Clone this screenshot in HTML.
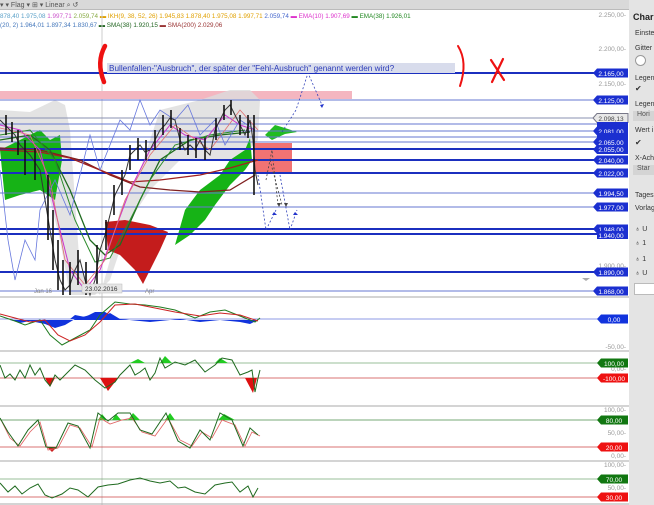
<!DOCTYPE html>
<html><head><meta charset="utf-8"><style>
html,body{margin:0;padding:0;background:#fff;overflow:hidden}
body{width:654px;height:505px;position:relative;font-family:"Liberation Sans",sans-serif}
svg{position:absolute;left:0;top:0}
.rp{position:absolute;left:629px;top:0;width:25px;height:505px;background:#e4e4e4}
.rp div{position:absolute;left:6px;font-size:7px;color:#333;white-space:nowrap}
</style></head><body>
<svg width="654" height="505" viewBox="0 0 654 505" font-family="Liberation Sans, sans-serif">
<rect x="0" y="0" width="654" height="10" fill="#d9d9d9"/>
<rect x="0" y="9" width="654" height="1" fill="#bbb"/>
<text x="0" y="7" font-size="7" fill="#555">▾ ▾ Flag  ▾  ⊞   ▾ Linear   ⌕  ↺</text>
<text font-size="6.3" y="18"><tspan fill="#5aa0c8">878,40 1.975,08 </tspan><tspan fill="#cc55cc">1.997,71 </tspan><tspan fill="#88aa44">2.059,74 </tspan><tspan fill="#e0a000">▬ IKH(9, 38, 52, 26) 1.945,83 1.878,40 1.975,08 1.997,71 </tspan><tspan fill="#4466cc">2.059,74 </tspan><tspan fill="#dd33cc">▬ EMA(10) 1.907,69 </tspan><tspan fill="#228822">▬ EMA(38) 1.926,01</tspan></text>
<text font-size="6.3" y="27"><tspan fill="#4477bb">(20, 2) 1.964,01 1.897,34 1.830,67 </tspan><tspan fill="#226622">▬ SMA(38) 1.920,15 </tspan><tspan fill="#993333">▬ SMA(200) 2.029,06</tspan></text>
<line x1="102" y1="10" x2="102" y2="505" stroke="#ccc" stroke-width="1"/>
<rect x="0" y="91" width="352" height="8" fill="#f4b6c0"/>
<path d="M0,110 L30,112 L55,100 L65,105 L70,130 L75,200 L80,270 L100,295 L110,260 L120,210 L140,170 L160,110 L200,100 L230,90 L250,90 L260,100 L258,140 L240,160 L220,160 L180,160 L150,190 L130,220 L110,280 L95,295 L70,295 L60,240 L45,180 L30,160 L0,150 Z" fill="#dcdcdc" opacity="0.8"/>
<path d="M0,150 L20,140 L40,130 L50,140 L60,135 L62,160 L55,200 L40,190 L20,195 L5,200 Z" fill="#16b316"/>
<path d="M250,138 L245,150 L230,160 L220,175 L200,190 L185,210 L175,245 L190,235 L205,220 L215,205 L230,185 L245,170 L252,160 Z" fill="#16b316"/>
<path d="M265,135 L275,125 L285,128 L297,132 L285,134 L272,140 Z" fill="#22bb22"/>
<path d="M105,222 L125,220 L150,225 L168,232 L160,250 L150,270 L143,284 L135,270 L120,255 L108,250 Z" fill="#c41c1c"/>
<rect x="255" y="143" width="37" height="30" fill="#f05a5a" opacity="0.85"/>
<g stroke="#1b2fbf">
<line x1="0" y1="73" x2="600" y2="73" stroke-width="2"/>
<line x1="0" y1="100" x2="600" y2="100" stroke-width="1" stroke="#6677d0"/>
<line x1="0" y1="118" x2="600" y2="118" stroke-width="1" stroke="#8890b0"/>
<line x1="0" y1="124" x2="600" y2="124" stroke-width="1" stroke="#6677d0"/>
<line x1="0" y1="131" x2="600" y2="131" stroke-width="1" stroke="#6677d0"/>
<line x1="0" y1="137" x2="600" y2="137" stroke-width="1" stroke="#6677d0"/>
<line x1="0" y1="142" x2="600" y2="142" stroke-width="1" stroke="#6677d0"/>
<line x1="0" y1="149" x2="600" y2="149" stroke-width="2"/>
<line x1="0" y1="160" x2="600" y2="160" stroke-width="2"/>
<line x1="0" y1="173" x2="600" y2="173" stroke-width="2"/>
<line x1="0" y1="193" x2="600" y2="193" stroke-width="1" stroke="#6677d0"/>
<line x1="0" y1="207" x2="600" y2="207" stroke-width="1" stroke="#6677d0"/>
<line x1="0" y1="229" x2="600" y2="229" stroke-width="2"/>
<line x1="0" y1="234" x2="600" y2="234" stroke-width="2"/>
<line x1="0" y1="272" x2="600" y2="272" stroke-width="2"/>
<line x1="0" y1="291" x2="600" y2="291" stroke-width="1" stroke="#6677d0"/>
</g>
<polyline fill="none" stroke="#7f1f1f" stroke-width="1.3" points="0,148 40,150 80,160 110,175 140,187 170,190 200,192 230,190 255,175"/>
<polyline fill="none" stroke="#a02020" stroke-width="1.3" points="0,150 40,152 70,158 100,170 130,182 160,180 200,175 230,168 258,160"/>
<polyline fill="none" stroke="#1f6a1f" stroke-width="1.3" points="0,140 30,135 50,150 70,190 90,240 105,255 120,245 140,200 160,160 190,140 220,135 250,132"/>
<polyline fill="none" stroke="#2a8a2a" stroke-width="1" points="0,135 30,130 55,160 75,220 95,262 110,258 130,220 150,180 175,145 210,135 245,130"/>
<polyline fill="none" stroke="#cc33cc" stroke-width="1" points="0,125 20,130 40,150 55,210 70,270 85,290 100,270 115,230 130,190 150,150 170,125 185,135 205,140 225,115 240,125 255,130"/>
<polyline fill="none" stroke="#e07070" stroke-width="0.8" points="0,128 30,135 50,180 65,260 85,285 105,260 125,200 150,155 175,125 210,150 240,110 258,130"/>
<polyline fill="none" stroke="#6677dd" stroke-width="0.8" points="0,170 8,240 15,280 25,240 35,260 40,210 55,180 70,215 90,135 100,170 110,145 120,120 130,130 140,100 150,125 160,110 175,120 188,105 200,135 215,120 225,145 240,120 255,130"/>
<!-- price candles -->
<polyline fill="none" stroke="#333" stroke-width="1" points="0,120 5,125 10,130 15,135 20,145 25,150 30,155 40,170 45,200 50,230 55,260 60,280 65,290 70,285 75,270 80,260 85,280 90,295 95,280 100,250 105,235 110,215 115,195 120,185 125,175 130,155 135,150 140,145 145,152 150,150 155,140 160,130 165,125 170,118 175,120 180,140 185,150 190,145 195,150 200,140 205,150 210,155 215,130 220,120 225,110 230,105 235,115 240,125 245,135 250,120 253,140 255,170 258,185"/>
<g stroke="#111" stroke-width="1.6">
<line x1="6" y1="115" x2="6" y2="135"/><line x1="12" y1="122" x2="12" y2="142"/><line x1="18" y1="130" x2="18" y2="155"/><line x1="25" y1="140" x2="25" y2="175"/><line x1="35" y1="148" x2="35" y2="180"/>
<line x1="48" y1="175" x2="48" y2="240"/><line x1="53" y1="210" x2="53" y2="270"/><line x1="58" y1="240" x2="58" y2="290"/><line x1="63" y1="260" x2="63" y2="295"/><line x1="70" y1="262" x2="70" y2="295"/><line x1="78" y1="250" x2="78" y2="285"/><line x1="86" y1="262" x2="86" y2="295"/>
<line x1="97" y1="245" x2="97" y2="285"/><line x1="106" y1="220" x2="106" y2="250"/><line x1="114" y1="185" x2="114" y2="215"/><line x1="122" y1="170" x2="122" y2="195"/><line x1="130" y1="145" x2="130" y2="170"/><line x1="138" y1="138" x2="138" y2="160"/><line x1="146" y1="140" x2="146" y2="160"/><line x1="155" y1="130" x2="155" y2="150"/>
<line x1="163" y1="115" x2="163" y2="135"/><line x1="171" y1="110" x2="171" y2="128"/><line x1="180" y1="128" x2="180" y2="150"/><line x1="188" y1="135" x2="188" y2="155"/><line x1="196" y1="138" x2="196" y2="158"/><line x1="205" y1="138" x2="205" y2="160"/>
<line x1="216" y1="118" x2="216" y2="140"/><line x1="224" y1="105" x2="224" y2="120"/><line x1="231" y1="100" x2="231" y2="115"/><line x1="240" y1="115" x2="240" y2="135"/><line x1="248" y1="115" x2="248" y2="138"/><line x1="254" y1="115" x2="254" y2="195"/>
</g>
<g stroke="#3344bb" stroke-width="0.8" stroke-dasharray="2,2" fill="none">
<polyline points="282,132 296,110 308,73 322,105"/>
<polyline points="258,175 266,230 276,210"/>
<polyline points="280,175 290,230 297,210"/>
</g>
<g stroke="#444" stroke-width="0.8" stroke-dasharray="2,2" fill="none">
<polyline points="266,180 272,150 278,205"/>
<polyline points="270,160 282,205"/>
</g>
<g fill="#2233cc"><path d="M320,105 l4,-1 -2,4z"/><path d="M274,212 l3,3 -5,0z"/><path d="M295,212 l3,3 -5,0z"/></g>
<g fill="#444"><path d="M277,203 l4,0 -2,4z"/><path d="M284,203 l4,0 -2,4z"/></g>
<rect x="107" y="63" width="348" height="10" fill="#d8dcec"/>
<text x="109" y="71" font-size="8.2" fill="#2a3ab8">Bullenfallen-"Ausbruch", der später der "Fehl-Ausbruch" genannt werden wird?</text>
<path d="M105,46 Q96,62 104,82" stroke="#ee1111" stroke-width="4.5" fill="none" stroke-linecap="round"/>
<path d="M458,46 Q468,62 460,86" stroke="#ee1111" stroke-width="2" fill="none" stroke-linecap="round"/>
<path d="M491,60 L504,80 M503,59 L492,82" stroke="#ee1111" stroke-width="2.2" fill="none" stroke-linecap="round"/>
<line x1="0" y1="297" x2="629" y2="297" stroke="#aaa"/>
<text x="34" y="293" font-size="6" fill="#888">Jan 16</text>
<rect x="82" y="284" width="40" height="9" fill="#e6e6e6" stroke="#bbb" stroke-width="0.5"/>
<text x="85" y="291" font-size="6.5" fill="#333">23.02.2016</text>
<text x="145" y="293" font-size="6" fill="#888">Apr</text>
<path d="M582,278 l8,0 -4,3z" fill="#aaa"/>
<g font-size="6.5" fill="#999" text-anchor="end">
<text x="626" y="17">2.250,00-</text>
<text x="626" y="51">2.200,00-</text>
<text x="626" y="86">2.150,00-</text>
<text x="626" y="268">1.900,00-</text>
<text x="626" y="349">-50,00-</text>
<text x="626" y="371">0,00-</text>
<text x="626" y="412">100,00-</text>
<text x="626" y="435">50,00-</text>
<text x="626" y="458">0,00-</text>
<text x="626" y="467">100,00-</text>
<text x="626" y="490">50,00-</text>
</g>
<g font-size="6.5" fill="#fff" text-anchor="middle">
<path d="M597,68.5 h31 v9 h-31 l-4,-4.5z" fill="#1b2fd0"/><text x="611" y="76">2.165,00</text>
<path d="M597,95.5 h31 v9 h-31 l-4,-4.5z" fill="#1b2fd0"/><text x="611" y="103">2.125,00</text>
<path d="M597,113.5 h31 v9 h-31 l-4,-4.5z" fill="#e8e8e8" stroke="#778"/><text x="611" y="121" fill="#444">2.098,13</text>
<path d="M597,122 h31 v6 h-31z" fill="#1b2fd0"/>
<path d="M597,126.5 h31 v9 h-31 l-4,-4.5z" fill="#1b2fd0"/><text x="611" y="134">2.081,00</text>
<path d="M597,133 h31 v6 h-31z" fill="#1b2fd0"/>
<path d="M597,137.5 h31 v9 h-31 l-4,-4.5z" fill="#1b2fd0"/><text x="611" y="145">2.065,00</text>
<path d="M597,145 h31 v9 h-31 l-4,-4.5z" fill="#1b2fd0"/><text x="611" y="152">2.055,00</text>
<path d="M597,155.5 h31 v9 h-31 l-4,-4.5z" fill="#1b2fd0"/><text x="611" y="163">2.040,00</text>
<path d="M597,168.5 h31 v9 h-31 l-4,-4.5z" fill="#1b2fd0"/><text x="611" y="176">2.022,00</text>
<path d="M597,188.5 h31 v9 h-31 l-4,-4.5z" fill="#1b2fd0"/><text x="611" y="196">1.994,50</text>
<path d="M597,202.5 h31 v9 h-31 l-4,-4.5z" fill="#1b2fd0"/><text x="611" y="210">1.977,00</text>
<path d="M597,224.5 h31 v9 h-31 l-4,-4.5z" fill="#1b2fd0"/><text x="611" y="232">1.948,00</text>
<path d="M597,231 h31 v8 h-31z" fill="#1b2fd0"/><text x="611" y="238">1.940,00</text>
<path d="M597,267.5 h31 v9 h-31 l-4,-4.5z" fill="#1b2fd0"/><text x="611" y="275">1.890,00</text>
<path d="M597,286.5 h31 v9 h-31 l-4,-4.5z" fill="#1b2fd0"/><text x="611" y="294">1.868,00</text>
</g>
<line x1="0" y1="319" x2="600" y2="319" stroke="#6677dd" stroke-width="0.8"/>
<path d="M10,320 L20,323 L30,321 L45,324 L55,328 L65,325 L75,319 L90,315 L100,318 L110,313 L120,319 L150,322 L160,321 L180,319 L200,322 L220,320 L240,322 L250,324 L258,320 Z" fill="#1133dd"/>
<path d="M70,319 L75,315 L85,317 L95,312 L105,312 L115,318 Z" fill="#1133dd"/>
<polyline fill="none" stroke="#1f7a1f" stroke-width="1" points="0,316 15,321 25,325 40,320 50,335 62,345 75,338 90,330 100,315 115,302 130,304 145,305 160,307 175,310 195,318 210,312 225,310 240,316 255,322 260,318"/>
<polyline fill="none" stroke="#cc2222" stroke-width="1" points="0,314 15,318 30,322 45,320 58,335 70,341 85,335 100,322 115,305 135,304 155,308 175,312 200,316 220,313 240,315 258,321"/>
<path d="M601,314.5 h27 v9 h-27 l-4,-4.5z" fill="#1133dd"/><text x="614" y="322" font-size="6.5" fill="#fff" text-anchor="middle">0,00</text>
<line x1="0" y1="351" x2="629" y2="351" stroke="#aaa"/>
<line x1="0" y1="363" x2="600" y2="363" stroke="#77aa77" stroke-width="0.8"/>
<line x1="0" y1="378" x2="600" y2="378" stroke="#cc4444" stroke-width="0.8"/>
<path d="M45,378 L50,387 L55,378 Z M100,378 L108,391 L118,378 Z M245,378 L253,393 L257,378 Z" fill="#dd1111"/>
<path d="M160,363 L165,356 L172,363 Z M215,363 L220,358 L228,363 Z M130,363 L138,359 L145,363 Z" fill="#22cc22"/>
<polyline fill="none" stroke="#1f6a1f" stroke-width="1" points="0,365 5,378 10,374 15,380 20,370 25,378 30,365 35,375 40,368 45,380 50,386 55,375 60,380 68,372 75,365 85,370 95,380 105,388 115,382 120,375 130,365 135,375 140,372 145,368 150,380 155,373 160,358 165,368 175,362 185,365 195,360 205,372 215,365 222,358 232,360 240,375 248,372 252,370 255,392 258,378 260,370"/>
<path d="M601,358.5 h27 v9 h-27 l-4,-4.5z" fill="#117711"/><text x="614" y="366" font-size="6.5" fill="#fff" text-anchor="middle">100,00</text>
<path d="M601,373.5 h27 v9 h-27 l-4,-4.5z" fill="#ee1111"/><text x="614" y="381" font-size="6.5" fill="#fff" text-anchor="middle">-100,00</text>
<line x1="0" y1="406" x2="629" y2="406" stroke="#aaa"/>
<line x1="0" y1="420" x2="600" y2="420" stroke="#77aa77" stroke-width="1"/>
<line x1="0" y1="447" x2="600" y2="447" stroke="#cc4444" stroke-width="0.8"/>
<path d="M98,420 L102,414 L107,420 Z M112,420 L116,414 L121,420 Z M128,420 L133,413 L140,420 Z M165,420 L170,413 L175,420 Z M218,420 L224,414 L235,420 Z" fill="#22cc22"/>
<path d="M47,447 L52,452 L57,447Z" fill="#cc2222"/>
<polyline fill="none" stroke="#e06060" stroke-width="0.8" points="1,420 10,438 20,446 30,432 40,422 48,450 58,448 70,425 80,428 92,447 100,418 110,424 122,420 132,418 142,432 155,436 168,418 180,440 192,446 202,432 212,438 222,420 235,425 245,446 252,432 260,436"/>
<polyline fill="none" stroke="#1f6a1f" stroke-width="1" points="0,418 8,432 18,446 28,430 38,420 46,447 56,448 68,423 78,426 90,448 98,413 108,421 118,413 130,413 140,430 152,434 166,413 178,441 190,448 200,430 210,440 220,413 232,420 243,446 250,428 258,435"/>
<path d="M601,415.5 h27 v9 h-27 l-4,-4.5z" fill="#117711"/><text x="614" y="423" font-size="6.5" fill="#fff" text-anchor="middle">80,00</text>
<path d="M601,442.5 h27 v9 h-27 l-4,-4.5z" fill="#ee1111"/><text x="614" y="450" font-size="6.5" fill="#fff" text-anchor="middle">20,00</text>
<line x1="0" y1="461" x2="629" y2="461" stroke="#aaa"/>
<line x1="0" y1="479" x2="600" y2="479" stroke="#77aa77" stroke-width="0.8"/>
<line x1="0" y1="497" x2="600" y2="497" stroke="#cc4444" stroke-width="0.8"/>
<polyline fill="none" stroke="#1f6a1f" stroke-width="1" points="0,483 8,492 15,486 22,494 30,488 38,484 45,495 52,498 62,494 70,488 78,490 88,497 98,487 108,485 118,484 130,480 140,478 150,481 160,483 170,481 178,488 185,487 195,492 205,494 215,485 225,483 232,482 240,492 248,486 253,497 258,488"/>
<path d="M601,474.5 h27 v9 h-27 l-4,-4.5z" fill="#117711"/><text x="614" y="482" font-size="6.5" fill="#fff" text-anchor="middle">70,00</text>
<path d="M601,492.5 h27 v9 h-27 l-4,-4.5z" fill="#ee1111"/><text x="614" y="500" font-size="6.5" fill="#fff" text-anchor="middle">30,00</text>
<line x1="0" y1="504" x2="629" y2="504" stroke="#aaa"/>
</svg>
<div class="rp">
<div style="left:4px;top:12px;font-size:9px;font-weight:bold;color:#222">Char</div>
<div style="top:30px">Einste</div>
<div style="top:45px">Gitter</div>
<div style="left:6px;top:55px;width:9px;height:9px;border:1px solid #999;border-radius:50%;background:#fff"></div>
<div style="top:75px">Legen</div>
<div style="top:84px;font-size:8px">✔</div>
<div style="top:101px">Legen</div>
<div style="left:4px;top:111px;width:22px;height:10px;background:#d4d4d4;color:#555;padding-left:4px">Hori</div>
<div style="top:127px">Wert i</div>
<div style="top:138px;font-size:8px">✔</div>
<div style="top:155px">X-Ach</div>
<div style="left:4px;top:165px;width:22px;height:10px;background:#d4d4d4;color:#555;padding-left:4px">Star</div>
<div style="top:192px">Tages</div>
<div style="top:205px">Vorlag</div>
<div style="top:226px">♁ U</div>
<div style="top:240px">♁ 1</div>
<div style="top:256px">♁ 1</div>
<div style="top:270px">♁ U</div>
<div style="left:5px;top:283px;width:20px;height:10px;background:#fff;border:1px solid #bbb"></div>
</div>
</body></html>
